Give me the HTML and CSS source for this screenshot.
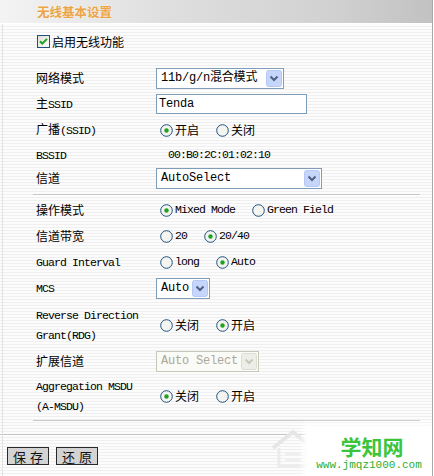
FILE: index.html
```html
<!DOCTYPE html>
<html lang="zh-CN">
<head>
<meta charset="utf-8">
<title>无线基本设置</title>
<link rel="stylesheet" href="styles.css">
</head>
<body>
<div class="page">
  <div class="header"><span class="title">无线基本设置</span></div>

  <div class="enable">
    <svg class="cb" width="13" height="13" viewBox="0 0 13 13">
      <defs><linearGradient id="cbg" x1="0" y1="0" x2="1" y2="1"><stop offset="0" stop-color="#dcdcd7"/><stop offset="1" stop-color="#ffffff"/></linearGradient></defs>
      <rect x="0.5" y="0.5" width="12" height="12" fill="url(#cbg)" stroke="#1c5180"/>
      <path d="M3 6.2 L5.3 8.6 L10 3.9" fill="none" stroke="#21a121" stroke-width="2"/>
    </svg>
    <span>启用无线功能</span>
  </div>

  <div class="form">
    <div class="row">
      <div class="lbl">网络模式</div>
      <div class="ctl">
        <div class="sel w128"><span class="sel-text">11b/g/n混合模式</span>
          <svg class="dd" width="16" height="17" viewBox="0 0 16 17"><rect x="0.5" y="0.5" width="15" height="16" rx="2" fill="#c6d6fa" stroke="#b3c8f4"/><path d="M4.5 6.5 L8 10 L11.5 6.5" fill="none" stroke="#4d6185" stroke-width="2"/></svg>
        </div>
      </div>
    </div>
    <div class="row">
      <div class="lbl">主<span class="en">SSID</span></div>
      <div class="ctl"><input class="txt" type="text" value="Tenda"></div>
    </div>
    <div class="row">
      <div class="lbl">广播<span class="en">(SSID)</span></div>
      <div class="ctl opts">
        <span class="opt"><svg class="rd" width="13" height="13" viewBox="0 0 13 13"><circle cx="6.5" cy="6.5" r="5.8" fill="#f4f4f0" stroke="#1c5180"/><circle cx="6.5" cy="6.5" r="2.2" fill="#21a121"/></svg>开启</span>
        <span class="opt"><svg class="rd" width="13" height="13" viewBox="0 0 13 13"><circle cx="6.5" cy="6.5" r="5.8" fill="#f4f4f0" stroke="#1c5180"/></svg>关闭</span>
      </div>
    </div>
    <div class="row h23">
      <div class="lbl"><span class="en">BSSID</span></div>
      <div class="ctl"><span class="en mac">00:B0:2C:01:02:10</span></div>
    </div>
    <div class="row h24">
      <div class="lbl">信道</div>
      <div class="ctl">
        <div class="sel w166"><span class="sel-text">AutoSelect</span>
          <svg class="dd" width="16" height="17" viewBox="0 0 16 17"><rect x="0.5" y="0.5" width="15" height="16" rx="2" fill="#c6d6fa" stroke="#b3c8f4"/><path d="M4.5 6.5 L8 10 L11.5 6.5" fill="none" stroke="#4d6185" stroke-width="2"/></svg>
        </div>
      </div>
    </div>

    <div class="sep"></div>

    <div class="row">
      <div class="lbl">操作模式</div>
      <div class="ctl opts">
        <span class="opt"><svg class="rd" width="13" height="13" viewBox="0 0 13 13"><circle cx="6.5" cy="6.5" r="5.8" fill="#f4f4f0" stroke="#1c5180"/><circle cx="6.5" cy="6.5" r="2.2" fill="#21a121"/></svg><span class="en">Mixed Mode</span></span>
        <span class="opt"><svg class="rd" width="13" height="13" viewBox="0 0 13 13"><circle cx="6.5" cy="6.5" r="5.8" fill="#f4f4f0" stroke="#1c5180"/></svg><span class="en">Green Field</span></span>
      </div>
    </div>
    <div class="row">
      <div class="lbl">信道带宽</div>
      <div class="ctl opts">
        <span class="opt"><svg class="rd" width="13" height="13" viewBox="0 0 13 13"><circle cx="6.5" cy="6.5" r="5.8" fill="#f4f4f0" stroke="#1c5180"/></svg><span class="en">20</span></span>
        <span class="opt"><svg class="rd" width="13" height="13" viewBox="0 0 13 13"><circle cx="6.5" cy="6.5" r="5.8" fill="#f4f4f0" stroke="#1c5180"/><circle cx="6.5" cy="6.5" r="2.2" fill="#21a121"/></svg><span class="en">20/40</span></span>
      </div>
    </div>
    <div class="row">
      <div class="lbl"><span class="en">Guard Interval</span></div>
      <div class="ctl opts">
        <span class="opt"><svg class="rd" width="13" height="13" viewBox="0 0 13 13"><circle cx="6.5" cy="6.5" r="5.8" fill="#f4f4f0" stroke="#1c5180"/></svg><span class="en">long</span></span>
        <span class="opt"><svg class="rd" width="13" height="13" viewBox="0 0 13 13"><circle cx="6.5" cy="6.5" r="5.8" fill="#f4f4f0" stroke="#1c5180"/><circle cx="6.5" cy="6.5" r="2.2" fill="#21a121"/></svg><span class="en">Auto</span></span>
      </div>
    </div>
    <div class="row">
      <div class="lbl"><span class="en">MCS</span></div>
      <div class="ctl">
        <div class="sel w54"><span class="sel-text">Auto</span>
          <svg class="dd" width="16" height="17" viewBox="0 0 16 17"><rect x="0.5" y="0.5" width="15" height="16" rx="2" fill="#c6d6fa" stroke="#b3c8f4"/><path d="M4.5 6.5 L8 10 L11.5 6.5" fill="none" stroke="#4d6185" stroke-width="2"/></svg>
        </div>
      </div>
    </div>
    <div class="row h48">
      <div class="lbl two"><span class="en">Reverse Direction<br>Grant(RDG)</span></div>
      <div class="ctl opts">
        <span class="opt"><svg class="rd" width="13" height="13" viewBox="0 0 13 13"><circle cx="6.5" cy="6.5" r="5.8" fill="#f4f4f0" stroke="#1c5180"/></svg>关闭</span>
        <span class="opt"><svg class="rd" width="13" height="13" viewBox="0 0 13 13"><circle cx="6.5" cy="6.5" r="5.8" fill="#f4f4f0" stroke="#1c5180"/><circle cx="6.5" cy="6.5" r="2.2" fill="#21a121"/></svg>开启</span>
      </div>
    </div>
    <div class="row h24">
      <div class="lbl">扩展信道</div>
      <div class="ctl">
        <div class="sel w103 disabled"><span class="sel-text">Auto Select</span>
          <svg class="dd" width="16" height="17" viewBox="0 0 16 17"><rect x="0.5" y="0.5" width="15" height="16" rx="2" fill="#eeeee8" stroke="#dcdcd4"/><path d="M4.5 6.5 L8 10 L11.5 6.5" fill="none" stroke="#c9c7ba" stroke-width="2"/></svg>
        </div>
      </div>
    </div>
    <div class="row h46">
      <div class="lbl two"><span class="en">Aggregation MSDU<br>(A-MSDU)</span></div>
      <div class="ctl opts">
        <span class="opt"><svg class="rd" width="13" height="13" viewBox="0 0 13 13"><circle cx="6.5" cy="6.5" r="5.8" fill="#f4f4f0" stroke="#1c5180"/><circle cx="6.5" cy="6.5" r="2.2" fill="#21a121"/></svg>关闭</span>
        <span class="opt"><svg class="rd" width="13" height="13" viewBox="0 0 13 13"><circle cx="6.5" cy="6.5" r="5.8" fill="#f4f4f0" stroke="#1c5180"/></svg>开启</span>
      </div>
    </div>

    <div class="sep sep2"></div>
  </div>

  <div class="fullline"></div>

  <div class="buttons">
    <button class="btn" type="button">保存</button>
    <button class="btn" type="button">还原</button>
  </div>

  <div class="wm">
    <svg class="wm-house" width="46" height="44" viewBox="0 0 46 44">
      <path d="M4 22 L24 6 L44 22" fill="none" stroke="#e6e6e6" stroke-width="4"/>
      <path d="M10 22 V40 H38 V22" fill="none" stroke="#ececec" stroke-width="3"/>
      <path d="M16 28 H32 M16 34 H32" stroke="#efefef" stroke-width="2"/>
    </svg>
    <div class="wm-box">
      <div class="wm-title">学知网</div>
      <div class="wm-url">www.jmqz1000.com</div>
    </div>
  </div>
</div>
</body>
</html>
```

FILE: styles.css
```css
html, body {
  margin: 0;
  padding: 0;
  background: #ffffff;
}

body {
  font-family: "Liberation Mono", "Noto Sans CJK SC", monospace;
  font-size: 12px;
  color: #000000;
}

.page {
  position: relative;
  width: 433px;
  height: 476px;
  box-sizing: border-box;
  border-right: 1px solid #a8a8a8;
  overflow: hidden;
  background: repeating-linear-gradient(to bottom, #fcfcfc 0, #fcfcfc 2px, #efefef 2px, #efefef 3px);
}

.page::before {
  content: "";
  position: absolute;
  left: 2px;
  top: 24px;
  bottom: 0;
  width: 1px;
  background: #e2e2e2;
}

.header {
  height: 24px;
  background: linear-gradient(to right, #f3f3f3 0%, #dedede 40%, #d2d2d2 75%, #c2c2c2 100%);
  border-bottom: 1px solid #ffffff;
  box-sizing: border-box;
}

.title {
  display: block;
  padding-left: 37px;
  line-height: 23px;
  font-family: "Noto Sans CJK SC", sans-serif;
  font-size: 12.5px;
  font-weight: bold;
  color: #eba548;
  text-shadow: 0 0 2px #fff6e6;
}

.enable {
  display: flex;
  align-items: center;
  gap: 2px;
  padding: 11px 0 0 37px;
  height: 13px;
  font-family: "Noto Sans CJK SC", sans-serif;
  font-size: 12px;
  line-height: 13px;
}

.cb {
  display: block;
  flex: none;
}

.form {
  padding: 17px 12px 0 33px;
}

.row {
  display: flex;
  align-items: center;
  height: 26px;
}

.row.h23 { height: 23px; }
.row.h24 { height: 24px; }
.row.h48 { height: 48px; }
.row.h46 { height: 46px; }

.lbl {
  width: 123px;
  flex: none;
  box-sizing: border-box;
  padding-left: 3px;
  font-family: "Noto Sans CJK SC", sans-serif;
  font-size: 12px;
  line-height: 14px;
  white-space: nowrap;
}

.lbl.two {
  line-height: 18px;
}

.en {
  font-family: "Liberation Mono", monospace;
  font-size: 11.5px;
  letter-spacing: -0.9px;
}

.ctl {
  flex: 1;
  display: flex;
  align-items: center;
}

.mac {
  padding-left: 12px;
}

.opts {
  gap: 17px;
  padding-left: 4px;
  font-family: "Noto Sans CJK SC", sans-serif;
  font-size: 12px;
}

.opt {
  display: flex;
  align-items: center;
  gap: 2px;
  line-height: 14px;
  white-space: nowrap;
}

.rd {
  display: block;
  flex: none;
}

.sel {
  display: flex;
  align-items: center;
  height: 21px;
  box-sizing: border-box;
  border: 1px solid #7f9db9;
  background: #ffffff;
  padding: 1px;
}

.sel.w128 { width: 128px; }
.sel.w166 { width: 166px; }
.sel.w54 { width: 54px; }
.sel.w103 { width: 103px; }

.sel-text {
  flex: 1;
  padding-left: 3px;
  white-space: nowrap;
  overflow: hidden;
  font-family: "Liberation Mono", "Noto Sans CJK SC", monospace;
  font-size: 12px;
  letter-spacing: -0.2px;
  line-height: 17px;
}

.dd {
  display: block;
  flex: none;
}

.sel.disabled {
  border-color: #c9c7ba;
  background: #fafaf6;
}

.sel.disabled .sel-text {
  color: #aca899;
}

.txt {
  display: block;
  width: 151px;
  height: 20px;
  box-sizing: border-box;
  margin: 0;
  border: 1px solid #7f9db9;
  padding: 0 0 0 2px;
  background: #ffffff;
  font-family: "Liberation Mono", monospace;
  font-size: 12px;
  letter-spacing: -0.2px;
  color: #000000;
  outline: none;
}

.sep {
  height: 1px;
  margin: 4px 0 1px 0;
  background: #c8c8c8;
  border-bottom: 1px solid #ffffff;
}

.sep2 {
  margin: 1px 0 0 0;
}

.fullline {
  height: 1px;
  margin-top: 12px;
  background: #c4c4c4;
  border-bottom: 1px solid #ffffff;
}

.buttons {
  display: flex;
  gap: 7px;
  padding: 11px 0 0 7px;
}

.btn {
  width: 42px;
  height: 18px;
  margin: 0;
  padding: 0 0 0 5px;
  box-sizing: border-box;
  border: 1px solid #2a2a2a;
  border-radius: 0;
  background: #d3d3d3;
  font-family: "Noto Sans CJK SC", sans-serif;
  font-size: 13px;
  letter-spacing: 4px;
  line-height: 15px;
  text-align: left;
  white-space: nowrap;
  overflow: hidden;
  color: #111111;
}

.wm {
  position: absolute;
  right: 1px;
  bottom: 0;
  display: flex;
  align-items: flex-end;
}

.wm-house {
  display: block;
  margin-right: -8px;
  margin-bottom: 6px;
}

.wm-box {
  width: 124px;
  height: 48px;
  background: #ffffff;
  box-shadow: 0 0 6px 4px #ffffff;
  display: flex;
  flex-direction: column;
  align-items: center;
}

.wm-title {
  margin-top: 7px;
  padding-left: 6px;
  font-family: "Noto Sans CJK SC", sans-serif;
  font-size: 21px;
  font-weight: bold;
  line-height: 22px;
  color: #3cc43a;
}

.wm-url {
  margin-top: 2px;
  font-family: "Liberation Mono", monospace;
  font-size: 11px;
  line-height: 12px;
  color: #2eae2e;
}
```
